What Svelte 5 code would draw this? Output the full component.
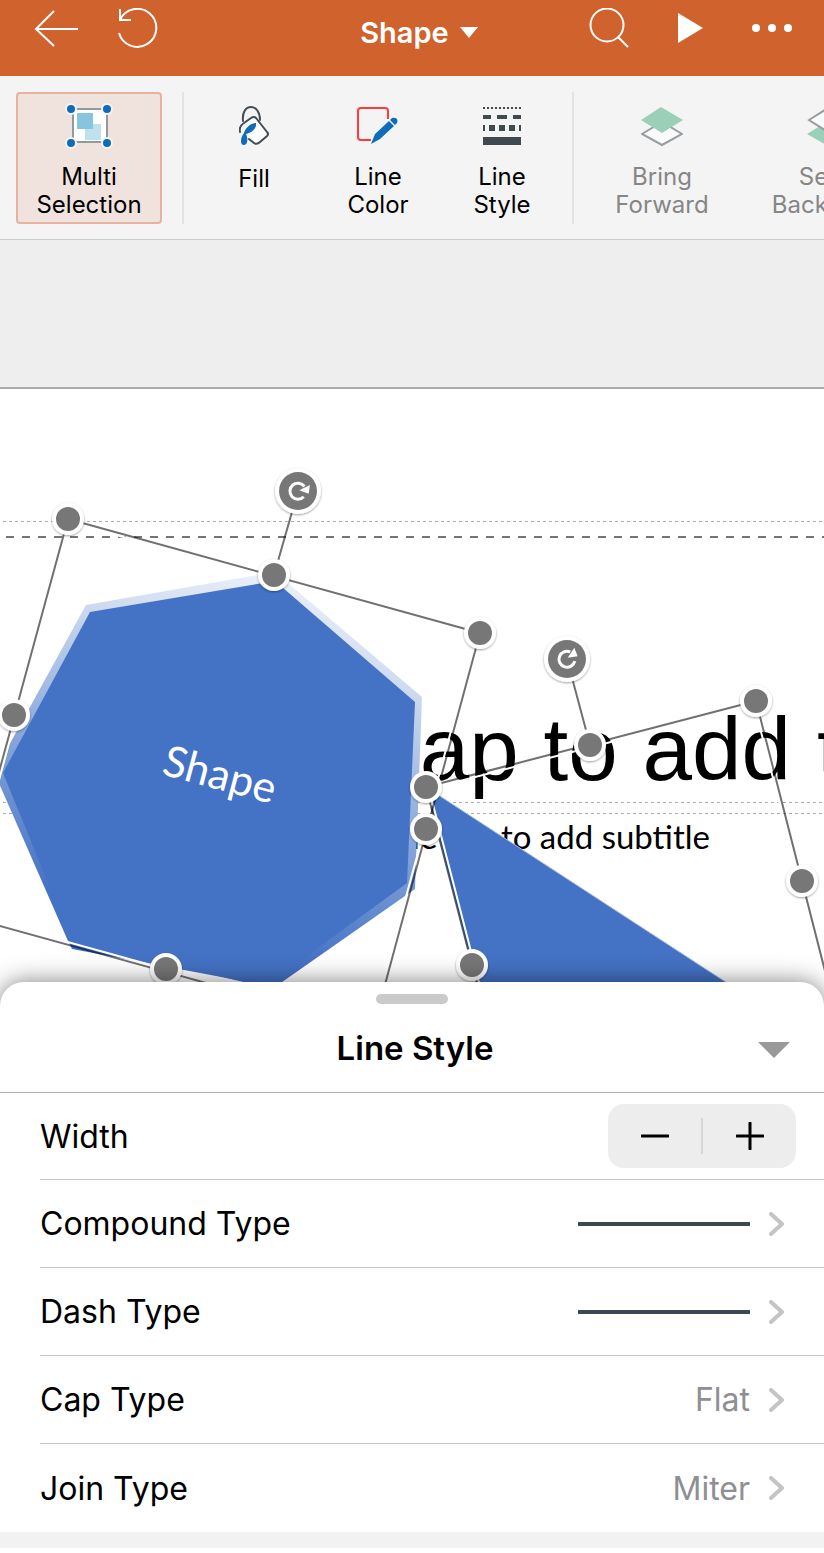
<script>
	const handles = [
		[68, 130],
		[274, 186],
		[480, 244],
		[14, 326],
		[166, 580],
		[426, 398],
		[426, 440],
		[590, 356],
		[756, 312],
		[802, 492],
		[472, 576],
	];

	const rotators = [
		{ x: 298, y: 102, angle: 15 },
		{ x: 567, y: 270, angle: -15 },
	];

	const lineRows = [
		{ label: "Compound Type", color: "#3c4a50" },
		{ label: "Dash Type", color: "#3c4856" },
	];

	const valueRows = [
		{ label: "Cap Type", value: "Flat" },
		{ label: "Join Type", value: "Miter" },
	];

	let multi = true;
	let width = 1;

	const changeWidth = (step) => {
		width = Math.max(0, width + step);
	};
</script>

<div class="app">
	<header class="top-bar">
		<div class="side">
			<button class="icon-button" aria-label="Back">
				<svg width="44" height="40" fill="none" stroke="#fff" stroke-width="2">
					<path d="M44 21H2M20 3 2 21l18 17" />
				</svg>
			</button>
			<button class="icon-button" aria-label="Undo">
				<svg width="42" height="40" fill="none" stroke="#fff" stroke-width="2">
					<path d="M2 1v11h11M2 12A19 19 0 1 1 1 25" />
				</svg>
			</button>
		</div>
		<button class="context">
			Shape
			<svg width="18" height="11"><path d="M0 0h18L9 11z" fill="#fff" /></svg>
		</button>
		<div class="side right">
			<button class="icon-button" aria-label="Search">
				<svg width="40" height="40" fill="none" stroke="#fff" stroke-width="2">
					<circle cx="18" cy="17" r="16.500" />
					<path d="m29 29 10 10" />
				</svg>
			</button>
			<button class="icon-button" aria-label="Play">
				<svg width="25" height="30"><path d="M0 0v30l25-15z" fill="#fff" /></svg>
			</button>
			<button class="icon-button" aria-label="More">
				<svg width="40" height="8" fill="#fff">
					<circle cx="4" cy="4" r="4" />
					<circle cx="20" cy="4" r="4" />
					<circle cx="36" cy="4" r="4" />
				</svg>
			</button>
		</div>
	</header>

	<nav class="toolbar">
		<button class="tool multi" class:active={multi} on:click={() => (multi = !multi)}>
			<svg width="48" height="48">
				<path d="M8 7h34v33H8z" fill="#fff" stroke="#939a9c" stroke-width="2" />
				<path d="M20 22h16v16H20z" fill="#bfe1eb" />
				<path d="M12 11h16v16H12z" fill="#86c5dd" />
				<g fill="#0f6cb8" stroke="#f4f4f4" stroke-width="2">
					<circle cx="6" cy="7" r="5" />
					<circle cx="42" cy="7" r="5" />
					<circle cx="6" cy="41" r="5" />
					<circle cx="42" cy="41" r="5" />
				</g>
			</svg>
			<span>Multi<br />Selection</span>
		</button>
		<i class="divider"></i>
		<div class="tools">
			<button class="tool">
				<svg width="30" height="48">
					<g fill="none" stroke="#424c53" stroke-width="2" stroke-linejoin="round" stroke-linecap="round">
						<path d="M8 22 16 15 28 31Q30 33 27 36L20 41Q18 42 11 37L8 26z" fill="#fff" stroke="none" />
						<path d="M4 19C3 10 7 5 12 5s9 5 9 13" />
						<path d="M1 30c-1-4 1-7 4-9l7-5q3-2 5 0l11 14q2 2 0 4l-7 6q-3 3-6 1l-5-4" />
					</g>
					<path d="M17 21c-6 0-11 6-12 10-4 5-4 12 0 12s4-7 2-11c6-1 11-6 10-11z" fill="#0f6cb8" />
				</svg>
				<span class="single">Fill</span>
			</button>
			<button class="tool">
				<svg width="42" height="48">
					<path d="M31 17V9q0-3-3-3H4Q1 6 1 9v26q0 3 3 3h10" fill="none" stroke="#ff393d" stroke-width="2" />
					<path d="m14 42 4-10 14-13 5 5-14 13zM33 18l2-2q3-1 5 1 1 2 0 4l-2 2z" fill="#0f6cb8" />
				</svg>
				<span>Line<br />Color</span>
			</button>
			<button class="tool">
				<svg width="38" height="48" fill="none" stroke="#3f4a50">
					<path d="M0 6h38" stroke-width="2" stroke-dasharray="2 2" />
					<path d="M0 15h8m6 0h10m6 0h8" stroke-width="4" />
					<path d="M0 26h2m4 0h6m4 0h6m4 0h6m4 0h2" stroke-width="6" />
					<path d="M0 39h38" stroke-width="8" />
				</svg>
				<span>Line<br />Style</span>
			</button>
		</div>
		<i class="divider"></i>
		<div class="tools arrange">
			<button class="tool" disabled>
				<svg width="42" height="48">
					<path d="m1 32 20-12 20 12-20 11z" fill="#fafafa" stroke="#989da1" stroke-width="2" />
					<path d="M0 18 20 5l22 13-21 13z" fill="#9ad0b8" />
				</svg>
				<span>Bring<br />Forward</span>
			</button>
			<button class="tool" disabled>
				<svg width="42" height="48">
					<path d="M0 32 21 19l21 13-21 12z" fill="#9ad0b8" />
					<path d="M2 18 21 6l19 12-19 12z" fill="#fafafa" stroke="#989da1" stroke-width="2" />
				</svg>
				<span>Send<br />Backward</span>
			</button>
		</div>
	</nav>

	<main class="workspace">
		<svg class="slide" width="100%" height="613">
			<defs>
				<linearGradient id="edge" gradientUnits="userSpaceOnUse" x1="281" y1="184" x2="174" y2="580">
					<stop offset="0" stop-color="#eef2fa" />
					<stop offset="0.2" stop-color="#ccd9ef" />
					<stop offset="0.6" stop-color="#7f9fd8" />
					<stop offset="0.9" stop-color="#4472c4" />
				</linearGradient>
				<filter id="lift" x="-20%" y="-20%" width="140%" height="150%">
					<feDropShadow dx="0" dy="1" stdDeviation="1" flood-opacity="0.4" />
				</filter>
			</defs>

			<g stroke="#aaa" stroke-dasharray="3 3" shape-rendering="crispEdges">
				<path d="M3 132H3000M3 413H3000M3 424H3000" />
			</g>
			<path d="M6 148H3000" stroke="#757575" stroke-width="2" stroke-dasharray="8 8" />

			<text class="title" x="791" y="391" text-anchor="end">Double tap to add</text>
			<text class="title" x="817" y="391">title</text>
			<text class="subtitle" x="710" y="460" text-anchor="end">Double tap to add subtitle</text>

			<path d="M86 216 275 183 422 308 415 500 275 598 72 560 68 552 -2 392 8 358z" fill="url(#edge)" />
			<path d="M90 223 275 192 415 313 407 494 264 598 72 552 3 384z" fill="#4472c4" />
			<text class="shape-text" transform="translate(216 400) rotate(15)" text-anchor="middle">Shape</text>
			<path d="M426 398 847 672 518 754z" fill="#4472c4" stroke="#a9bfe6" />

			<g fill="none" stroke="#fff" stroke-width="2">
				<path d="M69 133 477 246 371 637-37 524z" />
				<path d="M429 400 754 316 846 670 520 752z" />
			</g>
			<g fill="none" stroke="#000" stroke-opacity="0.56" stroke-width="2">
				<path d="M68 130 480 244 373 640-40 526z" />
				<path d="M426 398 756 312 848 672 518 754z" />
				<path d="M298 102 274 186M567 270l23 86" />
			</g>

			{#each handles as [x, y]}
				<g filter="url(#lift)">
					<circle cx={x} cy={y} r="16" fill="#fff" />
					<circle cx={x} cy={y} r="12" fill="#777" />
				</g>
			{/each}
			{#each rotators as { x, y, angle }}
				<g transform="translate({x} {y})" filter="url(#lift)">
					<circle r="23" fill="#fff" />
					<circle r="19" fill="#777" />
					<g transform="rotate({angle})">
						<path d="M5-6A8 8 0 1 0 7 4" fill="none" stroke="#fff" stroke-width="3" />
						<path d="M1-1 10-9 11 0z" fill="#fff" />
					</g>
				</g>
			{/each}
		</svg>
	</main>

	<section class="panel">
		<div class="grip"></div>
		<div class="panel-header">
			<h2>Line Style</h2>
			<button class="collapse" aria-label="Close panel">
				<svg width="32" height="16"><path d="M0 0h32L16 16z" fill="#999" /></svg>
			</button>
		</div>
		<div class="rows">
			<div class="row">
				<span>Width</span>
				<div class="stepper">
					<button aria-label="Decrease width" on:click={() => changeWidth(-1)}>
						<svg width="28" height="28"><path d="M1 14h26" /></svg>
					</button>
					<i></i>
					<button aria-label="Increase width" on:click={() => changeWidth(1)}>
						<svg width="28" height="28"><path d="M1 14h26M14 1v26" /></svg>
					</button>
				</div>
			</div>
			{#each lineRows as row}
				<button class="row">
					<span>{row.label}</span>
					<span class="sample" style="background: {row.color}"></span>
					<svg class="chevron" width="16" height="24"><path d="m2 2 11 10L2 22" /></svg>
				</button>
			{/each}
			{#each valueRows as row}
				<button class="row">
					<span>{row.label}</span>
					<span class="value">{row.value}</span>
					<svg class="chevron" width="16" height="24"><path d="m2 2 11 10L2 22" /></svg>
				</button>
			{/each}
		</div>
		<div class="panel-end"></div>
	</section>
</div>

<style>
	:global(body) {
		margin: 0;
		background: #fff;
	}

	.app {
		font-family: Inter, "Liberation Sans", sans-serif;
		color: #000;
		overflow: hidden;
	}

	button {
		padding: 0;
		border: none;
		background: none;
		color: inherit;
		font: inherit;
		cursor: pointer;
	}

	svg {
		display: block;
	}

	.top-bar {
		display: grid;
		grid-template-columns: 1fr auto 1fr;
		align-items: center;
		height: 56px;
		padding: 0 32px 20px 34px;
		background: #cf622d;
		color: #fff;
	}

	.side {
		display: flex;
		align-items: center;
		gap: 40px;
	}

	.right {
		justify-content: flex-end;
		gap: 49px;
	}

	.context {
		display: flex;
		align-items: center;
		gap: 11px;
		padding: 8px 0 0 12px;
		font-size: 29px;
		font-weight: 600;
	}

	.toolbar {
		display: flex;
		padding: 16px 16px 15px;
		border-bottom: 1px solid #ccc;
		background: #f4f4f4;
		overflow: hidden;
	}

	.tools {
		display: flex;
		flex-shrink: 0;
	}

	.tool {
		display: flex;
		flex-direction: column;
		align-items: center;
		flex-shrink: 0;
		box-sizing: border-box;
		width: 124px;
		height: 132px;
		padding-top: 10px;
		font-size: 24px;
		line-height: 28px;
	}

	.tool span {
		margin-top: 13px;
	}

	.tool .single {
		margin-top: 15px;
	}

	.multi {
		width: 146px;
		margin-right: 12px;
		padding-top: 8px;
		border: 2px solid transparent;
		border-radius: 4px;
	}

	.active {
		border-color: #e9b29e;
		background: #f0e3de;
	}

	.divider {
		flex-shrink: 0;
		width: 2px;
		margin: 0 8px;
		background: #e3e3e3;
	}

	.arrange {
		gap: 6px;
	}

	.arrange .tool {
		width: 160px;
		color: #868686;
	}

	.workspace {
		padding-top: 147px;
		background: #eee;
	}

	.slide {
		border-top: 2px solid #aaa;
		background: #fff;
	}

	.title {
		font: 89px "Liberation Sans", sans-serif;
	}

	.subtitle {
		font: 33px Lato, sans-serif;
	}

	.shape-text {
		font: 43px Lato, sans-serif;
		fill: #fff;
	}

	.panel {
		position: relative;
		margin-top: -20px;
		padding-top: 12px;
		border-radius: 24px 24px 0 0;
		background: #fff;
		box-shadow: 0 0 24px rgba(0, 0, 0, 0.5);
	}

	.grip {
		width: 72px;
		height: 10px;
		margin: 0 auto;
		border-radius: 5px;
		background: #cacaca;
	}

	.panel-header {
		display: grid;
		grid-template-columns: 1fr auto 1fr;
		align-items: center;
		height: 88px;
		padding: 0 34px 0 40px;
		border-bottom: 1px solid #b0b0b0;
	}

	h2 {
		grid-column: 2;
		margin: 0;
		font-size: 33px;
		font-weight: 600;
	}

	.collapse {
		justify-self: end;
		padding-top: 4px;
	}

	.rows {
		padding-left: 40px;
		font-size: 32px;
	}

	.row {
		display: flex;
		align-items: center;
		box-sizing: border-box;
		width: 100%;
		height: 88px;
		padding-right: 39px;
		border-bottom: 1px solid #c8c7cc;
		text-align: left;
	}

	.row:first-child {
		height: 87px;
		padding-right: 28px;
	}

	.row:last-child {
		border-bottom: none;
	}

	.row span:first-child {
		flex: 1;
	}

	.sample {
		width: 172px;
		height: 4px;
	}

	.value {
		color: #8e8e93;
	}

	.chevron {
		margin-left: 19px;
		fill: none;
		stroke: #c4c4c7;
		stroke-width: 4;
		stroke-linecap: round;
		stroke-linejoin: round;
	}

	.stepper {
		display: flex;
		align-items: center;
		width: 188px;
		height: 64px;
		border-radius: 16px;
		background: #ededed;
	}

	.stepper button {
		display: flex;
		flex: 1;
		align-items: center;
		justify-content: center;
		height: 100%;
	}

	.stepper svg {
		stroke: #000;
		stroke-width: 3;
		stroke-linecap: round;
	}

	.stepper i {
		width: 2px;
		height: 36px;
		background: #d6d6d6;
	}

	.panel-end {
		height: 16px;
		background: #f2f2f2;
	}
</style>
